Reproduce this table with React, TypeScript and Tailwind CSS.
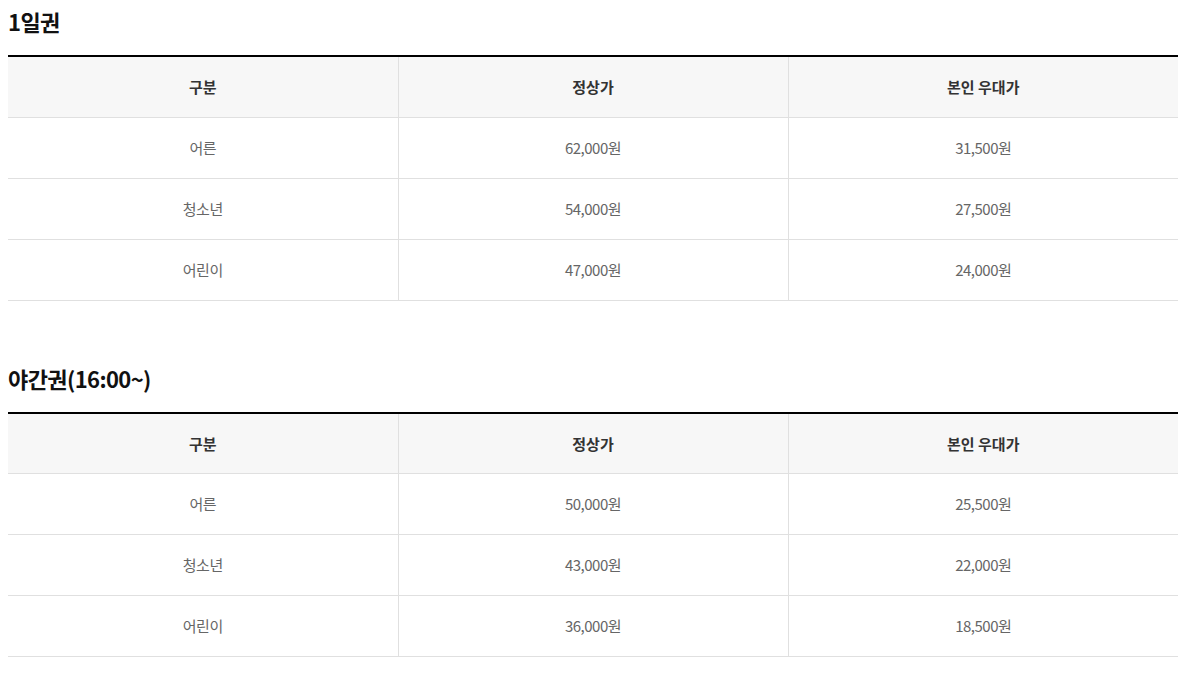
import React from "react";

const sections = [
  {
    title: "1일권",
    rows: [
      ["어른", "62,000원", "31,500원"],
      ["청소년", "54,000원", "27,500원"],
      ["어린이", "47,000원", "24,000원"],
    ],
  },
  {
    title: "야간권(16:00~)",
    rows: [
      ["어른", "50,000원", "25,500원"],
      ["청소년", "43,000원", "22,000원"],
      ["어린이", "36,000원", "18,500원"],
    ],
  },
];

export default function App() {
  return (
    <div
      className="bg-white pl-2 pr-3 pt-[5px]"
      style={{ fontFamily: '"Noto Sans CJK KR", "Noto Sans", sans-serif' }}
    >
      {sections.map((s, i) => (
        <div key={i} className={i > 0 ? "mt-[61px]" : ""}>
          <h2 className="text-[22px] leading-[33px] font-bold text-[#111] tracking-[-0.6px]">
            {s.title}
          </h2>
          <table className="mt-[17px] w-full table-fixed border-collapse border-t-2 border-black">
            <thead>
              <tr className="bg-[#f7f7f7] border-b border-[#e0e0e0]">
                {["구분", "정상가", "본인 우대가"].map((h, j) => (
                  <th
                    key={j}
                    className={`h-[61px] pt-[1px] text-center text-[15px] font-bold text-[#333] ${
                      j < 2 ? "border-r border-[#e0e0e0]" : ""
                    }`}
                  >
                    {h}
                  </th>
                ))}
              </tr>
            </thead>
            <tbody>
              {s.rows.map((r, k) => (
                <tr key={k} className="border-b border-[#e0e0e0]">
                  {r.map((c, j) => (
                    <td
                      key={j}
                      className={`h-[61px] pt-[1px] text-center text-[15px] text-[#666] tracking-[-0.5px] ${
                        j < 2 ? "border-r border-[#e0e0e0]" : ""
                      }`}
                    >
                      {c}
                    </td>
                  ))}
                </tr>
              ))}
            </tbody>
          </table>
        </div>
      ))}
    </div>
  );
}
